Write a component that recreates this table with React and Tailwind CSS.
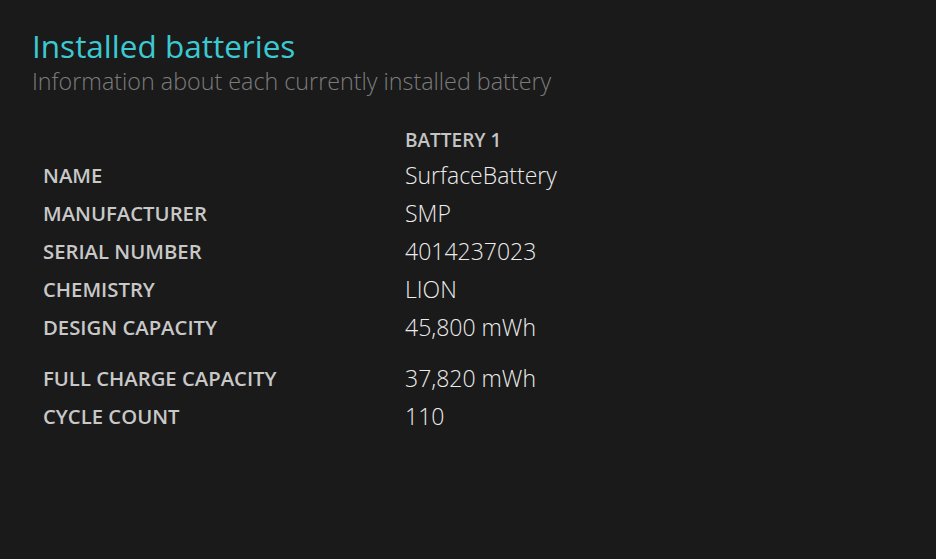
const rows = [
  { label: "NAME", value: "SurfaceBattery" },
  { label: "MANUFACTURER", value: "SMP" },
  { label: "SERIAL NUMBER", value: "4014237023" },
  { label: "CHEMISTRY", value: "LION" },
  { label: "DESIGN CAPACITY", value: "45,800 mWh", gapAfter: true },
  { label: "FULL CHARGE CAPACITY", value: "37,820 mWh" },
  { label: "CYCLE COUNT", value: "110" },
];

export default function App() {
  return (
    <div
      className="w-[936px] h-[559px] bg-[#1a1a1a] overflow-hidden pl-[32px] pt-[26px]"
      style={{ fontFamily: '"Open Sans", "Noto Sans", sans-serif' }}
    >
      <h1 className="text-[31.5px] leading-[39px] text-[#3cc9d2] font-normal">
        Installed batteries
      </h1>
      <p className="text-[23.3px] leading-[32px] font-light text-[#7c7c7c]">
        Information about each currently installed battery
      </p>

      <div className="mt-[27px] pl-[11px]">
        <div className="flex h-[32px] items-center">
          <div className="w-[362px]" />
          <div className="text-[19px] font-semibold text-[#c4c4c4]">BATTERY 1</div>
        </div>
        {rows.map((r) => (
          <div
            key={r.label}
            className={`flex h-[38px] items-center ${r.gapAfter ? "mb-[13px]" : ""}`}
          >
            <div className="w-[362px] text-[20.3px] font-semibold text-[#c8c8c8]">
              {r.label}
            </div>
            <div className="text-[23px] font-light text-[#ececec]">{r.value}</div>
          </div>
        ))}
      </div>
    </div>
  );
}
